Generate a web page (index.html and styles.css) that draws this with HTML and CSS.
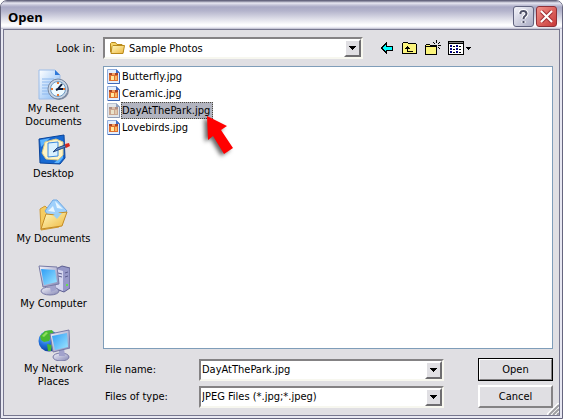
FILE: index.html
```html
<!DOCTYPE html>
<html lang="en">
<head>
    <meta charset="UTF-8">
    <meta name="viewport" content="width=device-width, initial-scale=1.0">
    <title>Open</title>
    <link rel="stylesheet" href="styles.css">
</head>
<body>
    <!-- Gradients shared by the icons -->
    <svg class="defs" width="0" height="0" aria-hidden="true">
        <defs>
            <linearGradient id="paper" x1="0" y1="0" x2="1" y2="1">
                <stop offset="0" stop-color="#ffffff"/>
                <stop offset="1" stop-color="#7fb6f5"/>
            </linearGradient>
            <linearGradient id="screen" x1="0" y1="0" x2="1" y2="1">
                <stop offset="0" stop-color="#2e9df5"/>
                <stop offset="1" stop-color="#9fe6ff"/>
            </linearGradient>
            <linearGradient id="metal" x1="0" y1="0" x2="1" y2="1">
                <stop offset="0" stop-color="#f4f4fb"/>
                <stop offset="1" stop-color="#8486b4"/>
            </linearGradient>
            <linearGradient id="folder" x1="0" y1="0" x2="1" y2="1">
                <stop offset="0" stop-color="#fffbc4"/>
                <stop offset="1" stop-color="#eeb63c"/>
            </linearGradient>
            <radialGradient id="globe" cx="0.35" cy="0.3" r="0.8">
                <stop offset="0" stop-color="#7fc4ff"/>
                <stop offset="0.5" stop-color="#1f70dc"/>
                <stop offset="1" stop-color="#0b2f8c"/>
            </radialGradient>
            <symbol id="picture" viewBox="0 0 14 16">
                <path d="M.5.5h9l3 3v11H.5z" fill="#e4eefc" stroke="#8fabdc"/>
                <path d="M9 0v4h4z" fill="#3f6fc8"/>
                <path d="M1 14.500h11.500V4" fill="none" stroke="#3f68b8"/>
                <path d="M2 4h9v8H2z" fill="#e0702c"/>
                <path d="M2 4h9v2H2z" fill="#a84428"/>
                <path d="M4 7h3v4H4z" fill="#ffe8a0"/>
                <path d="M8 7h2v4H8z" fill="#f8b868"/>
                <path d="M5 4h3v2H5z" fill="#f4a060"/>
            </symbol>
        </defs>
    </svg>

    <div class="window">
        <div class="titlebar">
            <h1>Open</h1>
            <button class="title-button" type="button" aria-label="Help">
                <svg width="19" height="19" viewBox="0 0 19 19">
                    <path d="M6.500 7V5.500Q7 4 9.500 4t3 2.500q0 1.500-1.500 2.500T9.500 12M9.500 14v2" fill="none" stroke="#fff" stroke-width="4"/>
                    <path d="M6.500 7V5.500Q7 4 9.500 4t3 2.500q0 1.500-1.500 2.500T9.500 12M9.500 14v2" fill="none" stroke="#4d4f66" stroke-width="2"/>
                </svg>
            </button>
            <button class="title-button close" type="button" aria-label="Close">
                <svg width="19" height="19" viewBox="0 0 19 19">
                    <path d="M4.500 4.500l10 10M14.500 4.500l-10 10" stroke="#a03038" stroke-width="4"/>
                    <path d="M4 4l11 11M15 4L4 15" stroke="#fff" stroke-width="2"/>
                </svg>
            </button>
        </div>

        <form class="panel">
            <div class="lookup">
                <label for="lookIn">Look in:</label>
                <div class="combo look-in">
                    <svg width="16" height="16" viewBox="0 0 16 16">
                        <path d="M1.500 12V3.500l1-1h4l1.500 2h5l1 1V12z" fill="#f5d568" stroke="#b98a1c"/>
                        <path d="M2 13.500l1-7 1-1h11.500L14 13.500z" fill="url(#folder)" stroke="#b98a1c"/>
                    </svg>
                    <select id="lookIn">
                        <option>Sample Photos</option>
                    </select>
                </div>
                <div class="tools">
                    <button type="button" aria-label="Back">
                        <svg width="14" height="16" viewBox="0 0 14 16">
                            <path d="M.5 8L5 3.500V6h6.500v4H5v2.500z" fill="#00ffff" stroke="#000"/>
                        </svg>
                    </button>
                    <button type="button" aria-label="Up one level">
                        <svg width="16" height="16" viewBox="0 0 16 16">
                            <path d="M.5 13.500v-10l1-1h4l1 1h7l1 1v9z" fill="#fbf47c" stroke="#000"/>
                            <path d="M5.500 6v5H11M3 8.500h5M4 7.500h3" fill="none" stroke="#000"/>
                        </svg>
                    </button>
                    <button type="button" aria-label="New folder">
                        <svg width="16" height="16" viewBox="0 0 16 16">
                            <path d="M.5 14.500v-9l1-1h3l1 1h6v9z" fill="#fbf47c" stroke="#000"/>
                            <path d="M1 6.500h10" stroke="#000"/>
                            <path d="M11 0h1v3h-1zM11 7h1v3h-1zM7 5h3v1H7zM13 5h3v1h-3zM8 2h1v1H8zM9 3h1v1H9zM14 2h1v1h-1zM13 3h1v1h-1zM13 7h1v1h-1zM14 8h1v1h-1z" fill="#000"/>
                        </svg>
                    </button>
                    <button type="button" aria-label="Views">
                        <svg width="24" height="16" viewBox="0 0 24 16">
                            <path d="M.5 1.500h15v13H.5z" fill="#fff" stroke="#000"/>
                            <path d="M1 2h14v1H1z" fill="#808080"/>
                            <path d="M1 3.500h14" stroke="#000"/>
                            <path d="M2 5h2v2H2zM2 8h2v2H2zM2 11h2v2H2zM8 5h2v2H8zM8 8h2v2H8zM8 11h2v2H8z" fill="#000080"/>
                            <path d="M5 6.500h2M5 9.500h2M5 12.500h2M11 6.500h2M11 9.500h2M11 12.500h2" stroke="#000"/>
                            <path d="M18 7h5v1h-1v1h-1v1h-1V9h-1V8h-1z" fill="#000"/>
                        </svg>
                    </button>
                </div>
            </div>

            <nav class="places">
                <a href="#">
                    <svg width="32" height="32" viewBox="0 0 32 32">
                        <path d="M1 1h16l5 5v24H1z" fill="url(#paper)" stroke="#9cbce8"/>
                        <path d="M17 1v5h5z" fill="#2f78d8"/>
                        <path d="M4 10h12M4 13h9M4 16h7M4 19h6M4 22h6M4 25h8" stroke="#8db8ee"/>
                        <circle cx="21" cy="21" r="10" fill="#7f8ba0"/>
                        <circle cx="20" cy="20" r="10" fill="#c8d4e4" stroke="#7888a0"/>
                        <circle cx="20" cy="20" r="7.500" fill="#eefaff" stroke="#6f9cc4"/>
                        <path d="M20 13v2M20 25v2M13 20h2M25 20h2" stroke="#e87830" stroke-width="2"/>
                        <path d="M24 15l-4 5h5M20 20l-2 1" fill="none" stroke="#102040" stroke-width="2"/>
                    </svg>
                    <span>My Recent Documents</span>
                </a>
                <a href="#">
                    <svg width="32" height="32" viewBox="0 0 32 32">
                        <path d="M1 5l25-4 1 23-5 6-20-1z" fill="#1769d2" stroke="#0a459c"/>
                        <path d="M2 6l10-2-9 9zM16 29l9-8v3l-4 5z" fill="#5cb4ff"/>
                        <path d="M7 8l11-3 7 3v13l-5 5-12-1-4-6z" fill="#fff4c4" stroke="#d8c888"/>
                        <path d="M10 9l10-1v14l-10 1z" fill="#d8f0ff" stroke="#3c8ae0"/>
                        <path d="M15 18l4-4 8-3 1 2-8 3z" fill="#5c88c8" stroke="#244880"/>
                        <path d="M27 10l4-1 1 3-4 2z" fill="#d8281c"/>
                    </svg>
                    <span>Desktop</span>
                </a>
                <a href="#">
                    <svg width="32" height="32" viewBox="0 0 32 32">
                        <path d="M2 10l5-3 3 3 8-2 3 20-18 3z" fill="#f5cc60" stroke="#cf9a34"/>
                        <path d="M7 12L15 1h4l10 11-12 14z" fill="#9fd0fb" stroke="#6fa8e4"/>
                        <path d="M17 2l8 8-6-1zM10 12l5-5 2 6z" fill="#e8f6ff"/>
                        <path d="M3 30l5-15 10 1 3-2 8-1-5 14z" fill="url(#folder)" stroke="#c48b24"/>
                        <path d="M15 16l4-2h5l-5 6z" fill="#9bd0f5"/>
                    </svg>
                    <span>My Documents</span>
                </a>
                <a href="#">
                    <svg width="32" height="32" viewBox="0 0 32 32">
                        <path d="M18 5l6-3 8 2v20l-6 4-8-3z" fill="#9698c8" stroke="#5d5e91"/>
                        <path d="M18 5l7 2v20l-7-3z" fill="#d4d5ef"/>
                        <path d="M20 9l4 1M20 12l4 1M27 9l3-1M27 13l3-1" stroke="#5d5e91"/>
                        <path d="M28 20h2v2h-2z" fill="#65e048"/>
                        <ellipse cx="12" cy="27" rx="9" ry="4" fill="url(#metal)" stroke="#7779a5"/>
                        <path d="M11 19l6-1 1 8-5 2z" fill="#a1a2cc"/>
                        <path d="M1 2l18 1 2 17-16 3z" fill="url(#metal)" stroke="#7779a5"/>
                        <path d="M3 5l14 1 2 12-13 3z" fill="url(#screen)"/>
                    </svg>
                    <span>My Computer</span>
                </a>
                <a href="#">
                    <svg width="32" height="32" viewBox="0 0 32 32">
                        <circle cx="11" cy="12" r="10.500" fill="url(#globe)"/>
                        <path d="M2 7l5-5 7-1 3 5-4 2-2 4-5 1-3-2zM9 15l5 1-1 6h-3z" fill="#48b832"/>
                        <path d="M4 7l4-4 2 1-4 4z" fill="#8be05c"/>
                        <ellipse cx="23" cy="28" rx="8" ry="4" fill="url(#metal)" stroke="#7779a5"/>
                        <path d="M21 20l5-1 1 8h-6z" fill="#a1a2cc"/>
                        <path d="M12 5l19-4 1 18-17 4z" fill="url(#metal)" stroke="#7779a5"/>
                        <path d="M14 7l15-3 1 14-13 3z" fill="url(#screen)"/>
                    </svg>
                    <span>My Network Places</span>
                </a>
            </nav>

            <div class="files">
                <ul>
                    <li><svg width="14" height="16"><use href="#picture"/></svg><span>Butterfly.jpg</span></li>
                    <li><svg width="14" height="16"><use href="#picture"/></svg><span>Ceramic.jpg</span></li>
                    <li class="selected">
                        <svg width="14" height="16"><use href="#picture"/></svg><span>DayAtThePark.jpg</span>
                        <svg class="pointer" width="34" height="44" viewBox="0 0 34 44">
                            <path d="M5 1l20 10-6 4 12 18-9 6-11-18-5 4z" fill="#ff0000"/>
                        </svg>
                    </li>
                    <li><svg width="14" height="16"><use href="#picture"/></svg><span>Lovebirds.jpg</span></li>
                </ul>
            </div>

            <div class="fields">
                <label for="fileName">File name:</label>
                <div class="combo">
                    <input type="text" id="fileName" value="DayAtThePark.jpg">
                    <button class="drop" type="button" aria-label="Recent names"></button>
                </div>
                <button class="action default" type="submit">Open</button>

                <label for="fileType">Files of type:</label>
                <div class="combo">
                    <select id="fileType">
                        <option>JPEG Files (*.jpg;*.jpeg)</option>
                    </select>
                </div>
                <button class="action" type="button">Cancel</button>
            </div>

            <svg class="grip" width="12" height="12" viewBox="0 0 12 12">
                <path d="M0 12L12 0M4 12l8-8M8 12l4-4" stroke="#fff" stroke-width="2"/>
                <path d="M2 12L12 2M6 12l6-6M10 12l2-2" stroke="#9d9da1" stroke-width="2"/>
            </svg>
        </form>
    </div>
</body>
</html>
```
FILE: styles.css
```css
*, *::after {
    box-sizing: border-box;
}

body {
    margin: 0;
    background-color: #fff;
    color: #000;
    font-family: "DejaVu Sans Condensed", Tahoma, sans-serif;
    font-size: 11px;
    line-height: 13px;
}

svg {
    display: block;
    flex-shrink: 0;
}

.defs {
    position: absolute;
}

button, input, select {
    font: inherit;
    color: inherit;
    border-radius: 0;
    margin: 0;
}

.window {
    display: flex;
    flex-direction: column;
    min-height: 100vh;
    padding: 0 2px 2px;
    border: 1px solid #66667f;
    border-radius: 7px 7px 0 0;
    background-color: #e8e8f2;
}

.titlebar {
    display: flex;
    align-items: center;
    gap: 2px;
    height: 28px;
    margin: 0 -2px;
    padding: 3px 5px 0 7px;
    border-radius: 6px 6px 0 0;
    background: linear-gradient(#77778f 0, #e8e8f2 2px, #c4c4d8 4px, #a9a9c5 6px, #b4b4cc 10px, #ffffff 24px, #f4f4fa 26px, #b8b8ca 28px);
}

.titlebar h1 {
    flex: 1;
    margin: 0;
    font-family: "Open Sans", "Trebuchet MS", sans-serif;
    font-size: 13px;
    line-height: 16px;
}

.title-button {
    width: 21px;
    height: 21px;
    padding: 0;
    border: 1px solid #60637f;
    border-radius: 3px;
    background: linear-gradient(135deg, #f4f4fa, #a9abc4);
}

.title-button.close {
    border-color: #8e3038;
    background: linear-gradient(135deg, #f09088, #c83838);
}

.panel {
    position: relative;
    flex: 1;
    display: grid;
    grid-template-columns: 99px 1fr;
    grid-template-rows: auto 1fr auto;
    padding: 7px 6px 7px 0;
    border: 1px solid #77778f;
    background-color: #e0dfe3;
}

.lookup {
    grid-column: 1 / 3;
    display: flex;
    align-items: center;
    margin-bottom: 7px;
}

.lookup label {
    width: 99px;
    padding-right: 8px;
    text-align: right;
}

.combo {
    display: flex;
    align-items: center;
    height: 22px;
    border: 2px solid;
    border-color: #848284 #f7f7ef #f7f7ef #848284;
    background-color: #fff;
}

.look-in {
    flex: 1;
    padding-left: 4px;
}

.combo select, .combo input {
    flex: 1;
    min-width: 0;
    height: 18px;
    padding: 0 0 0 1px;
    border: none;
    outline: none;
    background: transparent;
}

.combo select {
    appearance: none;
}

.look-in select {
    padding-left: 4px;
}

/* drop-down button, drawn the same for inputs and selects */
.drop, .combo:has(select)::after {
    content: "";
    width: 17px;
    height: 18px;
    padding: 0;
    border: 2px solid;
    border-color: #fff #6e6d70 #6e6d70 #fff;
    background: linear-gradient(#000, #000) 3px 5px / 7px 1px no-repeat,
        linear-gradient(#000, #000) 4px 6px / 5px 1px no-repeat,
        linear-gradient(#000, #000) 5px 7px / 3px 1px no-repeat,
        linear-gradient(#000, #000) 6px 8px / 1px 1px no-repeat,
        #e0dfe3;
}

.combo:has(select)::after {
    pointer-events: none;
}

.tools {
    display: flex;
    align-items: center;
    gap: 7px;
    width: 190px;
    padding-left: 18px;
}

.tools button {
    padding: 0;
    border: none;
    background: none;
}

.tools svg {
    shape-rendering: crispEdges;
}

.places {
    grid-row: 2 / 4;
}

.places a {
    display: flex;
    flex-direction: column;
    align-items: center;
    gap: 1px;
    min-height: 65px;
    padding-top: 3px;
    color: #000;
    text-align: center;
    text-decoration: none;
}

.places span {
    max-width: 76px;
}

.files {
    border: 1px solid #7f9db9;
    background-color: #fff;
}

.files ul {
    list-style: none;
    margin: 0;
    padding: 1px 3px;
}

.files li {
    position: relative;
    display: flex;
    align-items: center;
    height: 17px;
}

.files span {
    padding: 1px 2px 1px 0;
    border: 1px solid transparent;
}

.files .selected span {
    border: 1px dotted #4d4b40;
    background-color: #b2b4bf;
}

.selected svg:first-child {
    filter: saturate(0.6) brightness(0.9);
    opacity: 0.6;
}

.pointer {
    position: absolute;
    top: 13px;
    left: 95px;
    filter: drop-shadow(-3px 2px 2px rgba(0, 0, 0, 0.6));
}

.fields {
    grid-column: 2;
    display: grid;
    grid-template-columns: 96px 1fr 75px;
    align-items: center;
    row-gap: 4px;
    padding-top: 9px;
}

.fields label {
    padding-left: 2px;
}

.fields .combo {
    margin-right: 34px;
}

.action {
    height: 23px;
    padding: 0;
    border: 2px solid;
    border-color: #fff #848284 #848284 #fff;
    background-color: #e0dfe3;
}

.action.default {
    outline: 1px solid #000;
    outline-offset: -1px;
}

.grip {
    position: absolute;
    right: 0;
    bottom: 0;
}
```
